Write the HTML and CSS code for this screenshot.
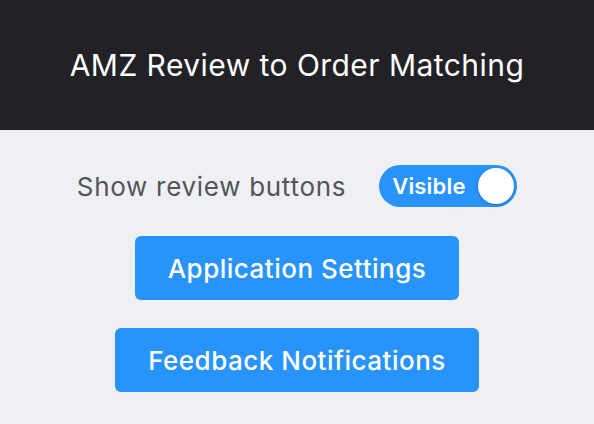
FILE: index.html
```html
<!DOCTYPE html>
<html lang="en">
  <head>
    <meta charset="UTF-8" />
    <meta name="viewport" content="width=device-width, initial-scale=1.0" />
    <title>AMZ Review to Order Matching</title>
    <link rel="stylesheet" href="styles.css">
  </head>
  <body>
    <!-- Header -->
    <header class="header">
      <h1>AMZ Review to Order Matching</h1>
    </header>

    <!-- Options -->
    <main class="content">
      <div class="option-row">
        <span class="option-label">Show review buttons</span>
        <label class="toggle">
          <span class="toggle-text">Visible</span>
          <span class="toggle-knob"></span>
        </label>
      </div>

      <button class="action-button">Application Settings</button>
      <button class="action-button">Feedback Notifications</button>
    </main>
  </body>
</html>
```

FILE: styles.css
```css
body {
  margin: 0;
  padding: 0;
  background-color: #eff0f4;
  font-family: Inter, "Noto Sans", sans-serif;
}

.header {
  background-color: #222126;
  height: 130px;
  display: flex;
  align-items: center;
  justify-content: center;
}

.header h1 {
  margin: 0;
  color: #fff;
  font-size: 30px;
  font-weight: 400;
  letter-spacing: 0.45px;
}

.content {
  display: flex;
  flex-direction: column;
  align-items: center;
  padding-top: 35px;
}

.option-row {
  display: flex;
  align-items: center;
  gap: 33px;
  margin-bottom: 29px;
}

.option-label {
  color: #555458;
  font-size: 26px;
  letter-spacing: 0.7px;
}

.toggle {
  display: flex;
  align-items: center;
  justify-content: space-between;
  width: 138px;
  height: 42px;
  box-sizing: border-box;
  padding: 0 3px 0 13px;
  background-color: #2893fb;
  border-radius: 21px;
}

.toggle-text {
  color: #fff;
  font-size: 22px;
  font-weight: 600;
  letter-spacing: 0.2px;
}

.toggle-knob {
  width: 36px;
  height: 36px;
  border-radius: 50%;
  background-color: #fff;
  box-shadow: 0 1px 3px rgba(0, 0, 0, 0.25);
}

.action-button {
  height: 64px;
  padding: 0 33px;
  margin-bottom: 28px;
  background-color: #2893fb;
  color: #fff;
  border: none;
  border-radius: 6px;
  font-family: Inter, "Noto Sans", sans-serif;
  font-size: 26px;
  font-weight: 500;
  letter-spacing: 0.5px;
  cursor: pointer;
}
```
